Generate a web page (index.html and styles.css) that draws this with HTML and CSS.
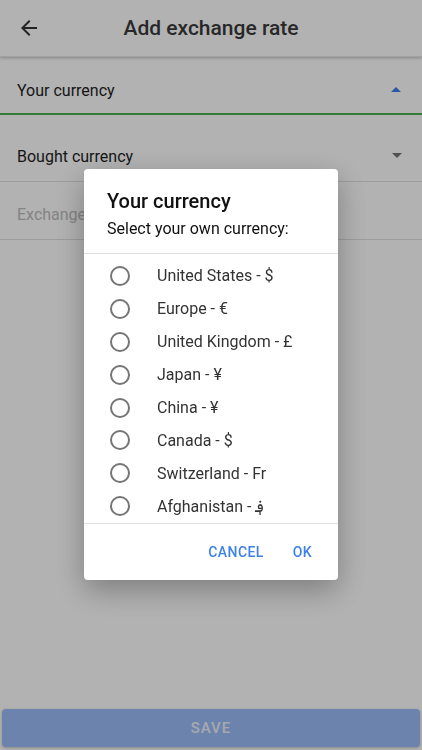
FILE: index.html
```html
<!DOCTYPE html>
<html lang="en">
<head>
  <meta charset="UTF-8">
  <title>Add exchange rate</title>
  <link rel="stylesheet" href="styles.css">
</head>
<body>
  <div class="page">
    <div class="header">
      <svg class="back" width="24" height="24" viewBox="0 0 24 24"><path d="M20 11H7.83l5.59-5.59L12 4l-8 8 8 8 1.41-1.41L7.83 13H20v-2z" fill="#333"/></svg>
      <h1>Add exchange rate</h1>
    </div>
    <div class="field field-active">
      <span>Your currency</span>
      <i class="arrow up"></i>
    </div>
    <div class="field field-second">
      <span>Bought currency</span>
      <i class="arrow down"></i>
    </div>
    <div class="field field-third">
      <span class="placeholder">Exchange rate</span>
    </div>
    <button class="save">SAVE</button>
  </div>

  <div class="scrim">
    <div class="dialog">
      <div class="dialog-head">
        <h2>Your currency</h2>
        <p>Select your own currency:</p>
      </div>
      <ul class="options">
        <li><span class="radio"></span>United States - $</li>
        <li><span class="radio"></span>Europe - €</li>
        <li><span class="radio"></span>United Kingdom - £</li>
        <li><span class="radio"></span>Japan - ¥</li>
        <li><span class="radio"></span>China - ¥</li>
        <li><span class="radio"></span>Canada - $</li>
        <li><span class="radio"></span>Switzerland - Fr</li>
        <li><span class="radio"></span>Afghanistan - ؋</li>
      </ul>
      <div class="actions">
        <a href="#">CANCEL</a>
        <a href="#">OK</a>
      </div>
    </div>
  </div>
</body>
</html>
```

FILE: styles.css
```css
*{
  margin: 0;
  padding: 0;
  box-sizing: border-box;
}
body{
  font-family: Roboto, "DejaVu Sans", sans-serif;
  background: #fff;
  color: #1e1e1e;
}
a{
  text-decoration: none;
}
ul{
  list-style: none;
}

/* page */
.page{
  height: 750px;
  display: flex;
  flex-direction: column;
}
.header{
  height: 57px;
  display: flex;
  align-items: center;
  justify-content: center;
  position: relative;
  box-shadow: 0 1px 3px rgba(0,0,0,0.25);
  border-bottom: 1px solid #e6e6e6;
}
.back{
  position: absolute;
  left: 17px;
  top: 16px;
}
.header h1{
  font-size: 21px;
  font-weight: 500;
  color: #3a3a3a;
  margin-top: 0;
}

.field{
  display: flex;
  align-items: flex-start;
  justify-content: space-between;
  padding: 0 21px 0 17px;
  font-size: 16px;
  line-height: 20px;
  border-bottom: 1px solid #e0e0e0;
}
.field-active{
  height: 58px;
  padding-top: 24px;
  border-bottom: 2px solid #4caf50;
}
.field-second{
  height: 67px;
  padding-top: 32px;
}
.field-third{
  height: 58px;
  padding-top: 23px;
}
.placeholder{
  color: #bdbdbd;
}
.arrow{
  width: 0;
  height: 0;
  border-left: 5px solid transparent;
  border-right: 5px solid transparent;
  margin-top: 6px;
}
.arrow.up{
  border-bottom: 5px solid #3f7fe8;
}
.arrow.down{
  border-top: 5px solid #757575;
  margin-right: -1px;
}

.save{
  margin: auto 2px 3px;
  height: 38px;
  border: none;
  border-radius: 4px;
  background: #9bbcf8;
  color: #eef2fa;
  font-family: Roboto, sans-serif;
  font-size: 15px;
  font-weight: 500;
  letter-spacing: 1px;
  box-shadow: 0 1px 3px rgba(0,0,0,0.25);
}

/* dialog */
.scrim{
  position: fixed;
  left: 0;
  top: 0;
  right: 0;
  bottom: 0;
  background: rgba(0,0,0,0.3);
  display: flex;
  align-items: center;
  justify-content: center;
}
.dialog{
  width: 254px;
  height: 411px;
  margin-top: -1px;
  background: #fff;
  border-radius: 4px;
  box-shadow: 0 10px 30px rgba(0,0,0,0.3);
  display: flex;
  flex-direction: column;
}
.dialog-head{
  padding: 20px 24px 0 23px;
  height: 85px;
  border-bottom: 1px solid #e0e0e0;
}
.dialog-head h2{
  font-size: 20px;
  font-weight: 500;
  line-height: 24px;
  color: #111;
}
.dialog-head p{
  font-size: 16px;
  line-height: 20px;
  margin-top: 6px;
  color: #111;
}
.options{
  padding-top: 5.5px;
  height: 270px;
  border-bottom: 1px solid #e0e0e0;
  overflow: hidden;
}
.options li{
  height: 32.9px;
  display: flex;
  align-items: center;
  padding-left: 26px;
  font-size: 16px;
  color: #333;
}
.radio{
  width: 20px;
  height: 20px;
  border: 2px solid #757575;
  border-radius: 50%;
  margin-right: 27px;
}
.actions{
  flex: 1;
  display: flex;
  align-items: center;
  justify-content: flex-end;
  padding-right: 26px;
  gap: 29px;
}
.actions a{
  color: #3d82e8;
  font-size: 14px;
  font-weight: 500;
  letter-spacing: 0.4px;
}
```
